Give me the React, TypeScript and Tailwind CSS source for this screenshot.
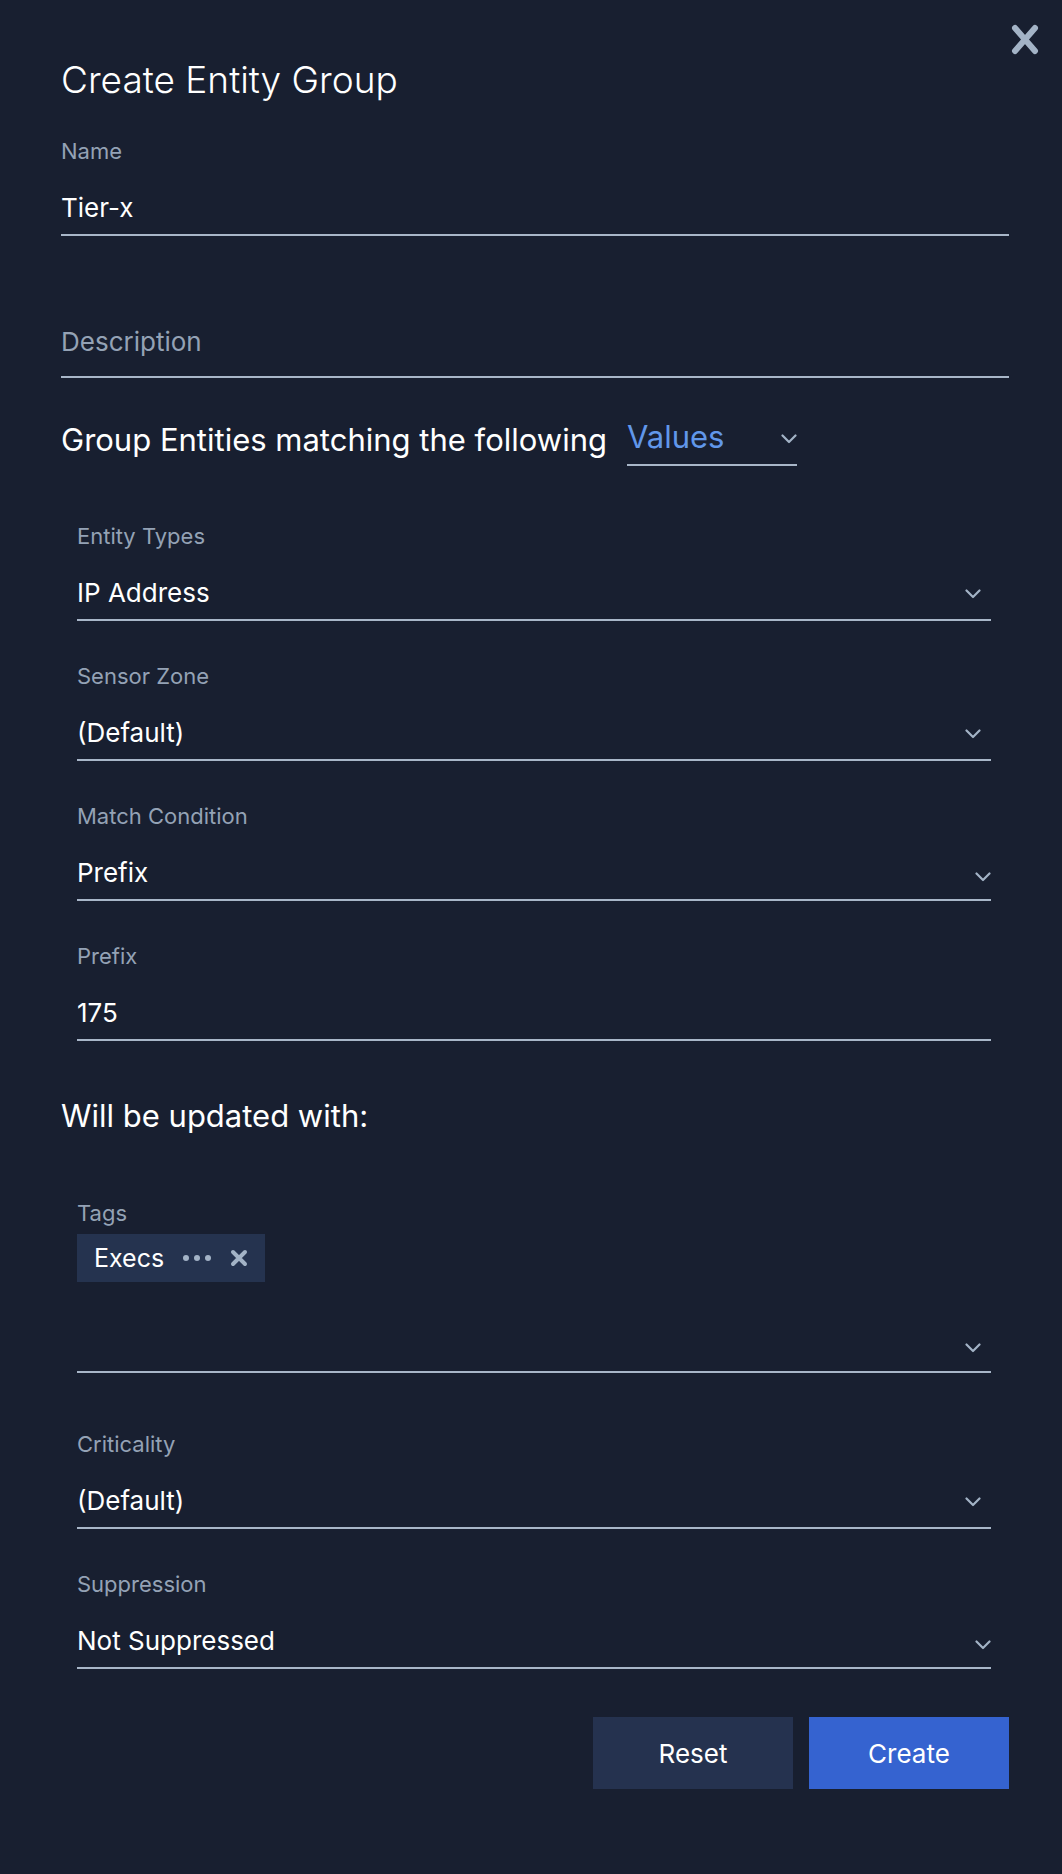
import React from "react";

const Chevron = ({ className = "" }: { className?: string }) => (
  <svg width="16" height="10" viewBox="0 0 16 10" className={className}>
    <path d="M1.5 1.5 L8 8 L14.5 1.5" fill="none" stroke="#a3b3c6" strokeWidth="2.2" strokeLinecap="round" strokeLinejoin="round" />
  </svg>
);

const Field = ({
  label,
  value,
  shifted = false,
  className = "",
}: {
  label: string;
  value: string;
  shifted?: boolean;
  className?: string;
}) => (
  <div className={className}>
    <div className="h-[28px] text-[22px] leading-[28px] text-[#94a2b5]">{label}</div>
    <div className="relative flex h-[71px] items-end border-b-2 border-[#a8b6c8] pb-[9px]">
      <span className="text-[26px] leading-[34px] text-white">{value}</span>
      {shifted ? (
        <Chevron className="absolute right-0 bottom-[17px]" />
      ) : (
        <Chevron className="absolute right-[10px] bottom-[20px]" />
      )}
    </div>
  </div>
);

export default function App() {
  return (
    <div className="relative min-h-[1874px] bg-[#181f30] pl-[61px] pr-[53px] font-['Inter',sans-serif] text-white">
      <button className="absolute right-[23px] top-[24px]" aria-label="Close">
        <svg width="28" height="31" viewBox="0 0 28 31">
          <path d="M4 4 L24 27 M24 4 L4 27" stroke="#a3b3c6" strokeWidth="6" strokeLinecap="round" />
        </svg>
      </button>

      <h1 className="pt-[56px] text-[37px] font-light leading-[48px]">Create Entity Group</h1>

      <div className="mt-[33px]">
        <div className="h-[28px] text-[22px] leading-[28px] text-[#94a2b5]">Name</div>
        <div className="flex h-[71px] items-end border-b-2 border-[#a8b6c8] pb-[9px]">
          <span className="text-[26px] leading-[34px] text-white">Tier-x</span>
        </div>
      </div>

      <div className="flex h-[142px] items-end border-b-2 border-[#a8b6c8] pb-[17px]">
        <span className="text-[26px] leading-[34px] text-[#94a2b5]">Description</span>
      </div>

      <div className="mt-[40px] flex items-end">
        <span className="mb-[7px] text-[31px] leading-[38px]">Group Entities matching the following</span>
        <div className="ml-[20px] flex h-[48px] w-[170px] items-end justify-between border-b-2 border-[#a8b6c8] pb-[8px]">
          <span className="text-[31px] leading-[38px] text-[#6197ea]">Values</span>
          <Chevron className="mb-[12px]" />
        </div>
      </div>

      <div className="mt-[56px] pl-[16px] pr-[18px]">
        <Field label="Entity Types" value="IP Address" />
        <Field label="Sensor Zone" value="(Default)" className="mt-[41px]" />
        <Field label="Match Condition" value="Prefix" shifted className="mt-[41px]" />
        <div className="mt-[41px]">
          <div className="h-[28px] text-[22px] leading-[28px] text-[#94a2b5]">Prefix</div>
          <div className="flex h-[71px] items-end border-b-2 border-[#a8b6c8] pb-[9px]">
            <span className="text-[26px] leading-[34px] text-white">175</span>
          </div>
        </div>
      </div>

      <h2 className="mt-[56px] text-[31px] font-normal leading-[38px]">Will be updated with:</h2>

      <div className="mt-[64px] pl-[16px] pr-[18px]">
        <div className="h-[28px] text-[22px] leading-[28px] text-[#94a2b5]">Tags</div>
        <div className="mt-[7px] flex h-[48px] w-[188px] items-center bg-[#25334f] pl-[17px] pr-[17px]">
          <span className="text-[25px] leading-[34px] text-white">Execs</span>
          <span className="ml-[19px] flex gap-[5px]">
            <span className="h-[6px] w-[6px] rounded-full bg-[#a3b3c6]" />
            <span className="h-[6px] w-[6px] rounded-full bg-[#a3b3c6]" />
            <span className="h-[6px] w-[6px] rounded-full bg-[#a3b3c6]" />
          </span>
          <svg width="18" height="18" viewBox="0 0 18 18" className="ml-auto">
            <path d="M3 3 L15 15 M15 3 L3 15" stroke="#a3b3c6" strokeWidth="4" strokeLinecap="round" />
          </svg>
        </div>
        <div className="relative h-[91px] border-b-2 border-[#a8b6c8]">
          <Chevron className="absolute right-[10px] bottom-[18px]" />
        </div>

        <Field label="Criticality" value="(Default)" className="mt-[57px]" />
        <Field label="Suppression" value="Not Suppressed" shifted className="mt-[41px]" />
      </div>

      <div className="mt-[48px] flex justify-end gap-[16px]">
        <button className="flex h-[72px] w-[200px] items-center justify-center bg-[#25324f] text-[26px] text-white">
          Reset
        </button>
        <button className="flex h-[72px] w-[200px] items-center justify-center bg-[#3563d0] text-[26px] text-white">
          Create
        </button>
      </div>
    </div>
  );
}
